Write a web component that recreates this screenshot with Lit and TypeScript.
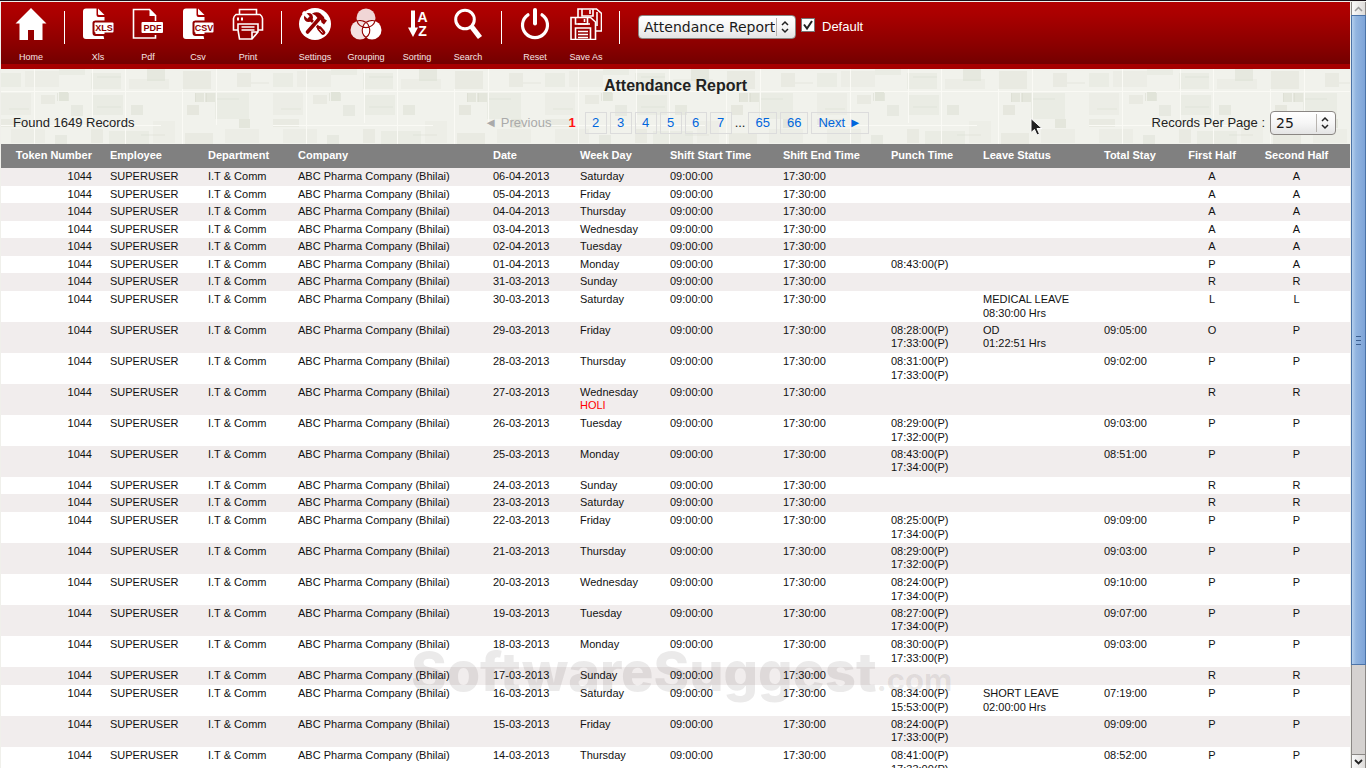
import { LitElement, html, svg, css, nothing } from "lit";
import { customElement, property } from "lit/decorators.js";

type Row = {
  date: string;
  day: string;
  note?: string;
  punches?: string[];
  leave?: string[];
  stay?: string;
  first: string;
  second: string;
};

const row = (
  date: string,
  day: string,
  first: string,
  second: string,
  extra: Partial<Row> = {}
): Row => ({ date, day, first, second, ...extra });

const ROWS: Row[] = [
  row("06-04-2013", "Saturday", "A", "A"),
  row("05-04-2013", "Friday", "A", "A"),
  row("04-04-2013", "Thursday", "A", "A"),
  row("03-04-2013", "Wednesday", "A", "A"),
  row("02-04-2013", "Tuesday", "A", "A"),
  row("01-04-2013", "Monday", "P", "A", { punches: ["08:43:00(P)"] }),
  row("31-03-2013", "Sunday", "R", "R"),
  row("30-03-2013", "Saturday", "L", "L", { leave: ["MEDICAL LEAVE", "08:30:00 Hrs"] }),
  row("29-03-2013", "Friday", "O", "P", {
    punches: ["08:28:00(P)", "17:33:00(P)"],
    leave: ["OD", "01:22:51 Hrs"],
    stay: "09:05:00",
  }),
  row("28-03-2013", "Thursday", "P", "P", { punches: ["08:31:00(P)", "17:33:00(P)"], stay: "09:02:00" }),
  row("27-03-2013", "Wednesday", "R", "R", { note: "HOLI" }),
  row("26-03-2013", "Tuesday", "P", "P", { punches: ["08:29:00(P)", "17:32:00(P)"], stay: "09:03:00" }),
  row("25-03-2013", "Monday", "P", "P", { punches: ["08:43:00(P)", "17:34:00(P)"], stay: "08:51:00" }),
  row("24-03-2013", "Sunday", "R", "R"),
  row("23-03-2013", "Saturday", "R", "R"),
  row("22-03-2013", "Friday", "P", "P", { punches: ["08:25:00(P)", "17:34:00(P)"], stay: "09:09:00" }),
  row("21-03-2013", "Thursday", "P", "P", { punches: ["08:29:00(P)", "17:32:00(P)"], stay: "09:03:00" }),
  row("20-03-2013", "Wednesday", "P", "P", { punches: ["08:24:00(P)", "17:34:00(P)"], stay: "09:10:00" }),
  row("19-03-2013", "Tuesday", "P", "P", { punches: ["08:27:00(P)", "17:34:00(P)"], stay: "09:07:00" }),
  row("18-03-2013", "Monday", "P", "P", { punches: ["08:30:00(P)", "17:33:00(P)"], stay: "09:03:00" }),
  row("17-03-2013", "Sunday", "R", "R"),
  row("16-03-2013", "Saturday", "P", "P", {
    punches: ["08:34:00(P)", "15:53:00(P)"],
    leave: ["SHORT LEAVE", "02:00:00 Hrs"],
    stay: "07:19:00",
  }),
  row("15-03-2013", "Friday", "P", "P", { punches: ["08:24:00(P)", "17:33:00(P)"], stay: "09:09:00" }),
  row("14-03-2013", "Thursday", "P", "P", { punches: ["08:41:00(P)", "17:33:00(P)"], stay: "08:52:00" }),
];

/* Column heading, cell class and width class. */
const COLUMNS: [string, string, string][] = [
  ["Token Number", "end", "w-token"],
  ["Employee", "", "w-employee"],
  ["Department", "", "w-department"],
  ["Company", "", "w-company"],
  ["Date", "", "w-date"],
  ["Week Day", "", "w-day"],
  ["Shift Start Time", "", "w-start"],
  ["Shift End Time", "", "w-finish"],
  ["Punch Time", "", "w-punch"],
  ["Leave Status", "", "w-leave"],
  ["Total Stay", "", "w-stay"],
  ["First Half", "mid", "w-first"],
  ["Second Half", "mid last", "w-second"],
];

const fileBody = svg`<path fill="#fff" d="M4 0.500h10.500v6.500q0 2 2 2h6v22H4q-3 0-3-3V3.500q0-3 3-3z"/>
  <path fill="#fff" d="M16 .5 22.500 7H17q-1 0-1-1z"/>
  <path fill="#930000" d="M13 12.500h10.500v3H14zM10.500 15q0-2.500 3-2.500V26H24v6h-1.500l-1-4h-8q-3 0-3-3z"/>
  <rect x="12.500" y="14.500" width="19" height="10" rx="1" fill="#fff"/>`;

const ICONS: Record<string, unknown> = {
  home: svg`<path fill="#fff" d="M16 0 .5 15.500h4V32H13V22h6v10h8.500V15.500h4z"/>`,
  xls: svg`${fileBody}<text class="tag" x="22" y="22.500" text-anchor="middle" fill="#8d0000">XLS</text>`,
  pdf: svg`<path fill="none" stroke="#fff" stroke-width="1.600" d="M23.500 13V7.500L17.500 1.500H1.500v28.500h22V27"/><path fill="#fff" d="M17.500 1l7 7h-7z"/>
    <rect x="9.500" y="14" width="21.500" height="11" rx="1" fill="#fff"/><text class="tag" x="20.500" y="23" text-anchor="middle" fill="#8d0000">PDF</text>`,
  csv: svg`${fileBody}<text class="tag" x="22" y="22.500" text-anchor="middle" fill="#8d0000">CSV</text>`,
  print: svg`<g fill="none" stroke="#fff" stroke-width="1.600"><path d="M7.500 7V1.500h17V7M6 22H1.500V10.500q0-2 2.500-4h24q2.500 2 2.500 4V22H26"/>
    <path d="M6 22V16h20v8l-6 7H7.500L6 22M20 31v-7h6M9.500 19h13M9.500 22h13"/></g><path fill="#fff" d="M5 9.500h2v3H5zM9 9.500h2v3H9z"/>`,
  settings: svg`<circle cx="16" cy="16" r="16" fill="#fff"/>
    <circle cx="9.500" cy="9.500" r="4.500" fill="#930000"/><path stroke="#fff" stroke-width="3.200" d="M9.500 9.500 4 4"/>
    <path stroke="#930000" stroke-width="3" stroke-linecap="round" d="M11 11l8 8"/><path stroke="#930000" stroke-width="4.800" stroke-linecap="round" d="M20.500 20.500l3.500 4"/>
    <path stroke="#fff" stroke-width="1" d="m20.500 21 3 3.500"/>
    <path stroke="#fff" stroke-width="5.500" d="M19.500 11.500 9 24"/><path stroke="#930000" stroke-width="3.600" stroke-linecap="round" d="M19.500 11.500 8.500 24"/>
    <path fill="#930000" d="M13 5.500q5-2.500 8.500 0l3.500 3.500.5 2 2.500 1.500-3 4-2.500-2-.5-2-3.500-2.500q-1.500-3-5.500-4.500z"/>`,
  grouping: svg`<circle cx="16" cy="10" r="9.500" fill="#f0d6d6"/><circle cx="10" cy="22" r="9.500" fill="#f4e0e0"/><circle cx="22" cy="22" r="9.500" fill="#fff"/>
    <g fill="none" stroke="#930000" stroke-width="1.100"><path d="M6.800 12.500a9.500 9.500 0 0 0 18.400 0M10 12.500a9.500 9.500 0 0 1 6 17M22 12.500a9.500 9.500 0 0 0-6 17M7 13q4-1.500 9 1.500 5-3 9-1.500"/></g>`,
  sorting: svg`<path fill="#fff" d="M10 2.500h4v17h3L12 29l-5-9.500h3z"/>
    <text class="az" x="21.500" y="13.500" text-anchor="middle" fill="#fff">A</text><text class="az" x="21.500" y="28" text-anchor="middle" fill="#fff">Z</text>`,
  search: svg`<g fill="none" stroke="#fff"><circle cx="13" cy="11.500" r="9.300" stroke-width="3"/><path stroke-width="5.200" d="M19.500 18.500 28 29.500"/></g>`,
  reset: svg`<g fill="none" stroke="#fff" stroke-linecap="round"><path stroke-width="3.200" d="M9 6.800a12.500 12.500 0 1 0 14 0"/><path stroke-width="4" d="M16 2v13.500"/></g>`,
  save: svg`<g fill="none" stroke="#fff" stroke-width="1.600"><path d="M8 9V1h18.500l5 4.500V23H26"/><path d="M12 1v7h11V1M20 2v4M27 4v14M8 16h12"/><path d="M1 9.500h19.500l5 4.500v17.500H1z"/>
    <path d="M5.500 10v6h12v-6M14.500 11v3M5.500 31V20h15v11M8 23.500h10M8 26.500h10M8 29.500h10"/></g>`,
};

@customElement("tool-button")
class ToolButton extends LitElement {
  @property() icon = "";
  @property() label = "";

  static styles = css`
    :host {
      display: block;
      width: 50px;
    }
    .tool {
      display: flex;
      flex-direction: column;
      align-items: center;
      gap: 11px;
      width: 100%;
      padding: 0;
      border: 0;
      background: none;
      color: #f6e4e4;
      font: 9px/12px "Liberation Sans", Arial, sans-serif;
      white-space: nowrap;
      cursor: pointer;
    }
    .glyph {
      display: block;
      width: 32px;
      height: 32px;
    }
    .tag {
      font: bold 9px "Liberation Sans", Arial, sans-serif;
    }
    .az {
      font: bold 14px "Liberation Sans", Arial, sans-serif;
    }
  `;

  render() {
    return html`<button class="tool" type="button">
      <svg class="glyph" viewBox="0 0 32 32" aria-hidden="true">${ICONS[this.icon]}</svg>
      <span>${this.label}</span>
    </button>`;
  }
}

@customElement("app-root")
class AppRoot extends LitElement {
  static styles = css`
    :host {
      display: flex;
      position: relative;
      box-sizing: border-box;
      height: 100vh;
      overflow: hidden;
      border-top: 1px solid #1c1018;
      background: #f0f0eb;
      color: #222;
      font: 13px/16px "Liberation Sans", Arial, sans-serif;
    }
    .page {
      flex: 1;
      min-width: 0;
      overflow: hidden;
      padding: 1px 0 0 1px;
    }
    .toolbar {
      display: flex;
      align-items: flex-start;
      box-sizing: border-box;
      height: 67px;
      padding: 6px 0 0 5px;
      border-bottom: 5px solid #a60000;
      background: linear-gradient(#b20000, #aa0000 20%, #8a0000 70%, #740000);
      color: #fff;
    }
    .group {
      display: flex;
    }
    .spaced {
      gap: 1px;
    }
    .divider {
      width: 1px;
      height: 33px;
      margin: 3px 8px 0;
      background: #fff;
    }
    .report {
      display: flex;
      align-items: center;
      gap: 5px;
      padding: 7px 0 0 10px;
    }
    .check {
      display: flex;
      align-items: center;
      gap: 7px;
    }
    .tickbox {
      display: grid;
      padding-bottom: 4px;
    }
    .tickbox > * {
      grid-area: 1 / 1;
    }
    .tick {
      appearance: none;
      box-sizing: border-box;
      width: 14px;
      height: 14px;
      margin: 0;
      border: 1px solid #777;
      background: #fff;
    }
    .mark {
      width: 14px;
      height: 14px;
      pointer-events: none;
    }
    .combo {
      display: grid;
    }
    .combo > * {
      grid-area: 1 / 1;
    }
    .select {
      appearance: none;
      box-sizing: border-box;
      height: 24px;
      padding: 0 20px 0 5px;
      border: 1px solid #8a8683;
      border-radius: 4px;
      background: linear-gradient(#fff, #f6f6f6 50%, #e4e4e4);
      color: #1a1a1a;
      font: 14px/20px "DejaVu Sans", sans-serif;
    }
    .name {
      width: 158px;
    }
    .count {
      width: 66px;
    }
    .arrows {
      justify-self: end;
      align-self: center;
      width: 20px;
      height: 18px;
      pointer-events: none;
    }
    .pattern {
      display: block;
      width: 100%;
      height: 100%;
    }
    .head {
      display: grid;
      grid-template-rows: 75px;
    }
    .head > * {
      grid-area: 1 / 1;
    }
    .title {
      margin: 0;
      padding-top: 7px;
      font: bold 16px/20px "Liberation Sans", Arial, sans-serif;
      text-align: center;
    }
    .pager {
      display: grid;
      grid-template-columns: 1fr auto 1fr;
      align-items: center;
      align-self: end;
      padding: 0 14px 9px 12px;
    }
    .links {
      display: flex;
      align-items: center;
      gap: 3px;
      padding-left: 4px;
    }
    .link {
      box-sizing: border-box;
      min-width: 22px;
      padding: 2px 6px;
      border: 1px solid #dcdcdc;
      color: #06d;
      text-align: center;
      text-decoration: none;
    }
    .off {
      padding-right: 14px;
      color: #aaa;
    }
    .now {
      padding-right: 6px;
      color: #f11;
      font-weight: bold;
    }
    .per {
      display: flex;
      align-items: center;
      justify-content: flex-end;
      gap: 5px;
    }
    .grid {
      width: 100%;
      border-collapse: collapse;
      table-layout: fixed;
      color: #111;
      font-size: 11px;
    }
    .w-token { width: 100px; }
    .w-employee { width: 98px; }
    .w-department { width: 90px; }
    .w-company { width: 195px; }
    .w-date { width: 87px; }
    .w-day { width: 90px; }
    .w-start { width: 113px; }
    .w-finish { width: 108px; }
    .w-punch { width: 92px; }
    .w-leave { width: 121px; }
    .w-stay { width: 75px; }
    .w-first { width: 84px; }
    .w-second { width: 96px; }
    .grid th {
      height: 22px;
      padding: 0 0 2px 9px;
      background: #808080;
      color: #fff;
      line-height: 14px;
      text-align: left;
      white-space: nowrap;
    }
    .grid td {
      padding: 1px 0 2px 9px;
      line-height: 14px;
      vertical-align: top;
      white-space: nowrap;
    }
    .grid tbody tr {
      background: #fff;
    }
    .grid tbody tr:nth-child(odd) {
      background: #f1eded;
    }
    .grid tbody tr:nth-child(odd) td {
      padding-top: 2px;
      padding-bottom: 3px;
      line-height: 13px;
    }
    .grid .end {
      padding-right: 9px;
      padding-left: 0;
      text-align: right;
    }
    .grid .mid {
      padding-left: 0;
      text-align: center;
    }
    .grid .last {
      padding-right: 11px;
    }
    .line {
      display: block;
    }
    .note {
      display: block;
      color: #f00;
    }
    .scroll {
      display: flex;
      flex-direction: column;
      box-sizing: border-box;
      width: 15px;
      margin: 1px 0 0 1px;
      border: solid #8b8885;
      border-width: 0 1px;
      background: #d5d2d0;
    }
    .step {
      display: block;
      height: 13px;
      padding: 0;
      border: 0;
      background: linear-gradient(90deg, #fafafa, #dedcda);
    }
    .step svg {
      display: block;
      margin: auto;
    }
    .track {
      display: flex;
      flex: 1;
      flex-direction: column;
      border-bottom: 1px solid #8b8885;
    }
    .thumb {
      display: flex;
      flex-direction: column;
      align-items: center;
      justify-content: center;
      gap: 3px;
      box-sizing: border-box;
      height: 88%;
      margin: 0 -1px;
      border: 1px solid #4c74a8;
      background: linear-gradient(90deg, #b4d0ee, #92b5e0 30%, #7ea4d8);
    }
    .grip {
      width: 5px;
      height: 1px;
      background: #3c6090;
    }
    .brand {
      position: absolute;
      top: 639px;
      left: 411px;
      color: rgba(60, 50, 50, 0.1);
      font: 800 54px/64px Inter, "Open Sans", sans-serif;
      white-space: nowrap;
      pointer-events: none;
    }
    .tld {
      font-size: 31px;
      font-weight: 700;
    }
    .pointer {
      position: absolute;
      top: 116px;
      left: 1029px;
      width: 15px;
      height: 20px;
      pointer-events: none;
    }
  `;

  private arrows() {
    return html`<svg class="arrows" viewBox="0 0 20 18" aria-hidden="true">
      <path d="M.5 0v18" stroke="#b8b4b0" />
      <path d="M6 7 9 4l3 3M6 11l3 3 3-3" fill="none" stroke="#222" stroke-width="1.500" />
    </svg>`;
  }

  private tools(items: [string, string][], spaced = false) {
    return html`<div class="group ${spaced ? "spaced" : ""}">
        ${items.map(([icon, label]) => html`<tool-button .icon=${icon} .label=${label}></tool-button>`)}
      </div>
      <span class="divider"></span>`;
  }

  /* Woven paper texture behind the title and the pager. */
  private texture() {
    const block = (x: number, y: number, w: number, h: number, o: number) =>
      svg`<rect x=${x} y=${y} width=${w} height=${h} fill="#dcded2" opacity=${o} />`;
    return html`<svg class="pattern" aria-hidden="true">
      <defs>
        <pattern id="weave" width="272" height="75" patternUnits="userSpaceOnUse">
          <rect width="272" height="75" fill="#f1f2ec" />
          ${[
            [0, 4, 20, 14, 0.3], [24, 2, 34, 16, 0.25], [58, 0, 26, 6, 0.35], [90, 4, 30, 16, 0.3],
            [146, 0, 18, 12, 0.5], [128, 10, 40, 10, 0.25], [182, 2, 28, 18, 0.4], [236, 4, 14, 14, 0.4],
            [0, 24, 30, 22, 0.25], [40, 26, 14, 9, 0.4], [58, 23, 9, 9, 0.75], [70, 36, 12, 11, 0.45],
            [92, 26, 30, 20, 0.35], [130, 36, 12, 10, 0.5], [186, 36, 12, 10, 0.55], [204, 24, 10, 9, 0.6],
            [214, 24, 34, 26, 0.35], [194, 24, 9, 9, 0.6], [238, 50, 11, 9, 0.6], [0, 50, 26, 8, 0.4],
            [10, 60, 34, 14, 0.25], [54, 66, 12, 9, 0.45], [90, 60, 12, 14, 0.4], [108, 62, 40, 13, 0.3],
            [152, 52, 22, 22, 0.2], [184, 64, 28, 11, 0.4], [224, 60, 34, 14, 0.25],
          ].map(([x, y, w, h, o]) => block(x, y, w, h, o))}
          <path
            d="M0 22.500h272M0 56.500h160M33.500 0v75M91.500 0v54M124.500 0v75M181.500 20v55M215.500 0v56"
            stroke="#fafaf5"
            fill="none"
          />
          <path
            d="M56.500 24v8M67.500 24v8M194.500 24v9M205.500 24v9M8 40h20M96 8h24M96 38h24M140 66h24M216 30h22M250 14h18"
            stroke="#d8d9cd"
            opacity=".5"
            fill="none"
          />
        </pattern>
      </defs>
      <rect width="100%" height="100%" fill="url(#weave)" />
    </svg>`;
  }

  private lines(values?: string[]) {
    return values ? values.map((v) => html`<span class="line">${v}</span>`) : nothing;
  }

  render() {
    return html`
      <main class="page">
        <header class="toolbar">
          ${this.tools([["home", "Home"]])}
          ${this.tools([["xls", "Xls"], ["pdf", "Pdf"], ["csv", "Csv"], ["print", "Print"]])}
          ${this.tools([["settings", "Settings"], ["grouping", "Grouping"], ["sorting", "Sorting"], ["search", "Search"]], true)}
          ${this.tools([["reset", "Reset"], ["save", "Save As"]], true)}
          <div class="report">
            <span class="combo">
              <select class="select name" aria-label="Report">
                <option>Attendance Report</option>
              </select>
              ${this.arrows()}
            </span>
            <label class="check">
              <span class="tickbox">
                <input class="tick" type="checkbox" checked />
                <svg class="mark" viewBox="0 0 14 14" aria-hidden="true">
                  <path d="M3 6.500 6 10.500 11 3" fill="none" stroke="#222" stroke-width="2" />
                </svg>
              </span>
              Default
            </label>
          </div>
        </header>

        <section class="head">
          ${this.texture()}
          <h1 class="title">Attendance Report</h1>
          <div class="pager">
            <span>Found 1649 Records</span>
            <nav class="links" aria-label="Pages">
              <span class="off">◄ Previous</span>
              <span class="now">1</span>
              ${[2, 3, 4, 5, 6, 7].map((n) => html`<a class="link" href="#${n}">${n}</a>`)}
              <span>...</span>
              <a class="link" href="#65">65</a>
              <a class="link" href="#66">66</a>
              <a class="link" href="#next">Next ►</a>
            </nav>
            <label class="per">
              Records Per Page :
              <span class="combo">
                <select class="select count">
                  <option>25</option>
                </select>
                ${this.arrows()}
              </span>
            </label>
          </div>
        </section>

        <table class="grid">
          <colgroup>
            ${COLUMNS.map(([, , width]) => html`<col class=${width} />`)}
          </colgroup>
          <thead>
            <tr>
              ${COLUMNS.map(([name, cls]) => html`<th class=${cls} scope="col">${name}</th>`)}
            </tr>
          </thead>
          <tbody>
            ${ROWS.map(
              (r) => html`<tr>
                <td class="end">1044</td>
                <td>SUPERUSER</td>
                <td>I.T &amp; Comm</td>
                <td>ABC Pharma Company (Bhilai)</td>
                <td>${r.date}</td>
                <td>${r.day}${r.note ? html`<span class="note">${r.note}</span>` : nothing}</td>
                <td>09:00:00</td>
                <td>17:30:00</td>
                <td>${this.lines(r.punches)}</td>
                <td>${this.lines(r.leave)}</td>
                <td>${r.stay ?? nothing}</td>
                <td class="mid">${r.first}</td>
                <td class="mid last">${r.second}</td>
              </tr>`
            )}
          </tbody>
        </table>
      </main>

      <aside class="scroll">
        <button class="step" type="button" aria-label="Scroll up">
          <svg width="9" height="6" viewBox="0 0 9 6"><path d="M1 5l3.500-3.500L8 5" fill="none" stroke="#999" stroke-width="1.500" /></svg>
        </button>
        <div class="track">
          <div class="thumb"><span class="grip"></span><span class="grip"></span><span class="grip"></span></div>
        </div>
        <button class="step" type="button" aria-label="Scroll down">
          <svg width="9" height="6" viewBox="0 0 9 6"><path d="M1 1l3.500 3.500L8 1" fill="none" stroke="#222" stroke-width="1.800" /></svg>
        </button>
      </aside>

      <div class="brand">SoftwareSuggest<span class="tld">.com</span></div>
      <svg class="pointer" viewBox="0 0 15 20" aria-hidden="true">
        <path d="M2 1.500v14l3.500-3 2.500 5.500 2.500-1L8 11.500h5z" fill="#222" stroke="#fff" stroke-width="1" />
      </svg>
    `;
  }
}
